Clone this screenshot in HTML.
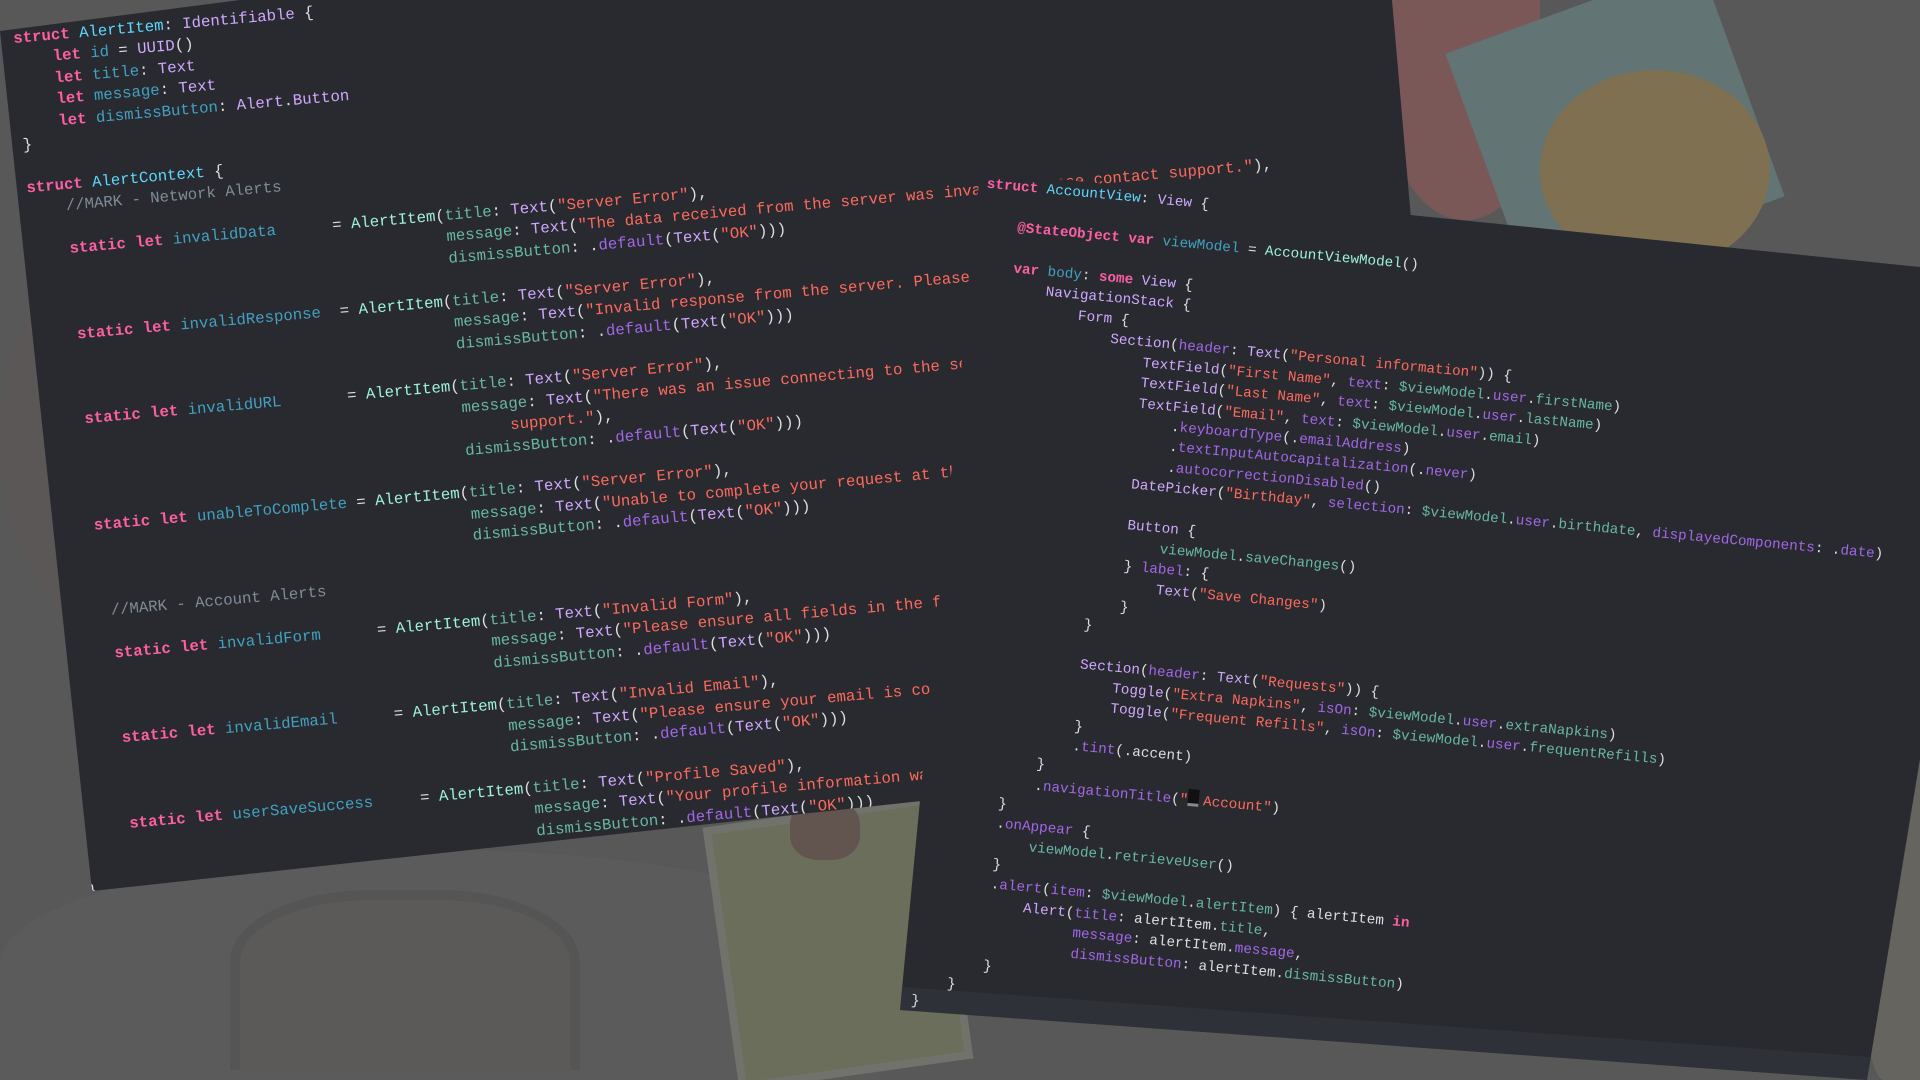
<!DOCTYPE html>
<html><head><meta charset="utf-8"><style>
html,body{margin:0;padding:0;width:1920px;height:1080px;overflow:hidden;background:#585858;}
#wrap{position:absolute;left:0;top:0;width:1920px;height:1080px;overflow:hidden;contain:paint;background:#585858;}
.abs{position:absolute;}
pre{margin:0;font-family:"Liberation Mono","DejaVu Sans Mono",monospace;color:#dfdfe0;white-space:pre;}
.k{color:#fc5fa3;font-weight:bold}
.d{color:#5dd8ff}
.t{color:#d0a8ff}
.p{color:#41a1c0}
.s{color:#fc6a5d}
.c{color:#7f8c98}
.g{color:#9ef1dd}
.m{color:#67b7a4}
.u{color:#a167e6}
.emo{display:inline-block;width:11px;height:14px;background:#111;border-bottom:3px solid #888;vertical-align:-2px;margin-right:4px}
</style></head><body>
<div id="wrap">
<!-- background illustrations -->
<div class="abs" style="left:0;top:200px;width:400px;height:480px;border-radius:50%;background:#5c5858;opacity:.8"></div>
<div class="abs" style="left:0;top:850px;width:880px;height:230px;border-radius:50% 50% 0 0;background:#5b5b5b"></div>
<div class="abs" style="left:230px;top:890px;width:330px;height:170px;border-radius:40% 40% 0 0;background:#5c5a58;border:10px solid #555;border-bottom:none"></div>
<div class="abs" style="left:720px;top:810px;width:220px;height:250px;background:#6a6e5a;transform:rotate(-8deg);border:8px solid #72726c"></div>
<div class="abs" style="left:790px;top:800px;width:70px;height:60px;background:#62554f;border-radius:40%"></div>
<div class="abs" style="left:1390px;top:0;width:150px;height:220px;border-radius:0 0 50% 50%;background:#7a5858"></div>
<div class="abs" style="left:1480px;top:0;width:270px;height:250px;background:#627474;transform:rotate(-20deg)"></div>
<div class="abs" style="left:1540px;top:70px;width:230px;height:200px;border-radius:50%;background:#7e7050"></div>
<div class="abs" style="left:1860px;top:700px;width:60px;height:380px;border-radius:40% 0 0 40%;background:#66645e"></div>

<!-- left panel -->
<div class="abs" style="left:0;top:0;width:1920px;height:1080px;clip-path:polygon(0px 31px,240px 0px,1392px 0px,1412px 230px,1200px 600px,1000px 793px,912px 802px,92px 891px);background:#292a30">
<div class="abs" style="left:0;top:0;transform:rotate(-5deg);transform-origin:0 0;">
<pre style="font-size:15.7px;line-height:21.4px;padding:30px 0 0 10px;"><span class="k">struct</span> <span class="d">AlertItem</span>: <span class="t">Identifiable</span> {
    <span class="k">let</span> <span class="p">id</span> = <span class="t">UUID</span>()
    <span class="k">let</span> <span class="p">title</span>: <span class="t">Text</span>
    <span class="k">let</span> <span class="p">message</span>: <span class="t">Text</span>
    <span class="k">let</span> <span class="p">dismissButton</span>: <span class="t">Alert</span>.<span class="t">Button</span>
}

<span class="k">struct</span> <span class="d">AlertContext</span> {
    <span class="c">//MARK - Network Alerts</span>

    <span class="k">static let</span> <span class="p">invalidData</span>      = <span class="g">AlertItem</span>(<span class="m">title</span>: <span class="t">Text</span>(<span class="s">"Server Error"</span>),
                                            <span class="m">message</span>: <span class="t">Text</span>(<span class="s">"The data received from the server was invalid. Please contact support."</span>),
                                            <span class="m">dismissButton</span>: .<span class="u">default</span>(<span class="t">Text</span>(<span class="s">"OK"</span>)))

    <span class="k">static let</span> <span class="p">invalidResponse</span>  = <span class="g">AlertItem</span>(<span class="m">title</span>: <span class="t">Text</span>(<span class="s">"Server Error"</span>),
                                            <span class="m">message</span>: <span class="t">Text</span>(<span class="s">"Invalid response from the server. Please try again later."</span>),
                                            <span class="m">dismissButton</span>: .<span class="u">default</span>(<span class="t">Text</span>(<span class="s">"OK"</span>)))

    <span class="k">static let</span> <span class="p">invalidURL</span>       = <span class="g">AlertItem</span>(<span class="m">title</span>: <span class="t">Text</span>(<span class="s">"Server Error"</span>),
                                            <span class="m">message</span>: <span class="t">Text</span>(<span class="s">"There was an issue connecting to the server. If this persists, please contact</span>
                                                 <span class="s">support."</span>),
                                            <span class="m">dismissButton</span>: .<span class="u">default</span>(<span class="t">Text</span>(<span class="s">"OK"</span>)))

    <span class="k">static let</span> <span class="p">unableToComplete</span> = <span class="g">AlertItem</span>(<span class="m">title</span>: <span class="t">Text</span>(<span class="s">"Server Error"</span>),
                                            <span class="m">message</span>: <span class="t">Text</span>(<span class="s">"Unable to complete your request at this time. Please check your connection."</span>),
                                            <span class="m">dismissButton</span>: .<span class="u">default</span>(<span class="t">Text</span>(<span class="s">"OK"</span>)))

     <span class="c">//MARK - Account Alerts</span>

     <span class="k">static let</span> <span class="p">invalidForm</span>      = <span class="g">AlertItem</span>(<span class="m">title</span>: <span class="t">Text</span>(<span class="s">"Invalid Form"</span>),
                                             <span class="m">message</span>: <span class="t">Text</span>(<span class="s">"Please ensure all fields in the form have been filled out."</span>),
                                             <span class="m">dismissButton</span>: .<span class="u">default</span>(<span class="t">Text</span>(<span class="s">"OK"</span>)))

     <span class="k">static let</span> <span class="p">invalidEmail</span>      = <span class="g">AlertItem</span>(<span class="m">title</span>: <span class="t">Text</span>(<span class="s">"Invalid Email"</span>),
                                              <span class="m">message</span>: <span class="t">Text</span>(<span class="s">"Please ensure your email is correct."</span>),
                                              <span class="m">dismissButton</span>: .<span class="u">default</span>(<span class="t">Text</span>(<span class="s">"OK"</span>)))

     <span class="k">static let</span> <span class="p">userSaveSuccess</span>     = <span class="g">AlertItem</span>(<span class="m">title</span>: <span class="t">Text</span>(<span class="s">"Profile Saved"</span>),
                                                <span class="m">message</span>: <span class="t">Text</span>(<span class="s">"Your profile information was successfully saved."</span>),
                                                <span class="m">dismissButton</span>: .<span class="u">default</span>(<span class="t">Text</span>(<span class="s">"OK"</span>)))
}</pre>
</div>
</div>

<!-- right panel -->
<div class="abs" style="left:0;top:0;width:1920px;height:1080px;clip-path:polygon(980px 171px,1920px 267px,1920px 759px,1867px 1080px,900px 1010px);background:#292a30">
<div class="abs" style="left:0;top:0;width:1920px;height:1080px;clip-path:polygon(903px 987px,1870px 1057px,1867px 1080px,900px 1010px);background:#2f3139"></div>
<div class="abs" style="left:980px;top:171px;transform:rotate(5.3deg);transform-origin:0 0;">
<pre style="font-size:14.3px;line-height:20.45px;padding:3px 0 0 8px;"><span class="k">struct</span> <span class="d">AccountView</span>: <span class="t">View</span> {

    <span class="k">@StateObject var</span> <span class="p">viewModel</span> = <span class="g">AccountViewModel</span>()

    <span class="k">var</span> <span class="p">body</span>: <span class="k">some</span> <span class="t">View</span> {
        <span class="t">NavigationStack</span> {
            <span class="t">Form</span> {
                <span class="t">Section</span>(<span class="u">header</span>: <span class="t">Text</span>(<span class="s">"Personal information"</span>)) {
                    <span class="t">TextField</span>(<span class="s">"First Name"</span>, <span class="u">text</span>: <span class="m">$viewModel</span>.<span class="u">user</span>.<span class="m">firstName</span>)
                    <span class="t">TextField</span>(<span class="s">"Last Name"</span>, <span class="u">text</span>: <span class="m">$viewModel</span>.<span class="u">user</span>.<span class="m">lastName</span>)
                    <span class="t">TextField</span>(<span class="s">"Email"</span>, <span class="u">text</span>: <span class="m">$viewModel</span>.<span class="u">user</span>.<span class="m">email</span>)
                        .<span class="u">keyboardType</span>(.<span class="u">emailAddress</span>)
                        .<span class="u">textInputAutocapitalization</span>(.<span class="u">never</span>)
                        .<span class="u">autocorrectionDisabled</span>()
                    <span class="t">DatePicker</span>(<span class="s">"Birthday"</span>, <span class="u">selection</span>: <span class="m">$viewModel</span>.<span class="u">user</span>.<span class="m">birthdate</span>, <span class="u">displayedComponents</span>: .<span class="u">date</span>)

                    <span class="t">Button</span> {
                        <span class="m">viewModel</span>.<span class="m">saveChanges</span>()
                    } <span class="u">label</span>: {
                        <span class="t">Text</span>(<span class="s">"Save Changes"</span>)
                    }
                }

                <span class="t">Section</span>(<span class="u">header</span>: <span class="t">Text</span>(<span class="s">"Requests"</span>)) {
                    <span class="t">Toggle</span>(<span class="s">"Extra Napkins"</span>, <span class="u">isOn</span>: <span class="m">$viewModel</span>.<span class="u">user</span>.<span class="m">extraNapkins</span>)
                    <span class="t">Toggle</span>(<span class="s">"Frequent Refills"</span>, <span class="u">isOn</span>: <span class="m">$viewModel</span>.<span class="u">user</span>.<span class="m">frequentRefills</span>)
                }
                .<span class="u">tint</span>(.accent)
            }
            .<span class="u">navigationTitle</span>(<span class="s">"<span class="emo"></span>Account"</span>)
        }
        .<span class="u">onAppear</span> {
            <span class="m">viewModel</span>.<span class="m">retrieveUser</span>()
        }
        .<span class="u">alert</span>(<span class="u">item</span>: <span class="m">$viewModel</span>.<span class="m">alertItem</span>) { alertItem <span class="k">in</span>
            <span class="t">Alert</span>(<span class="u">title</span>: alertItem.<span class="m">title</span>,
                  <span class="u">message</span>: alertItem.<span class="u">message</span>,
                  <span class="u">dismissButton</span>: alertItem.<span class="m">dismissButton</span>)
        }
    }
}</pre>
</div>
</div>
</div>
</body></html>
